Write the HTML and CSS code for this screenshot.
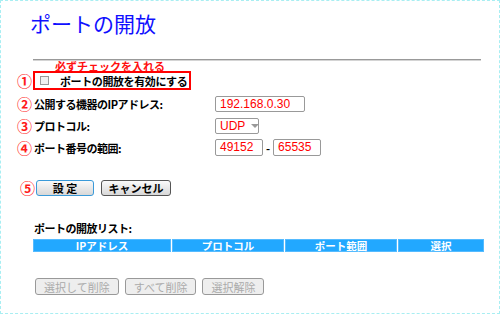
FILE: index.html
```html
<!DOCTYPE html>
<html lang="ja">
<head>
    <meta charset="UTF-8">
    <title>ポートの開放</title>
    <link rel="stylesheet" href="styles.css">
</head>
<body>
    <div class="page">
        <h1 class="title">ポートの開放</h1>
        <div class="rule"></div>

        <p class="note">必ずチェックを入れる</p>

        <div class="form">
            <span class="num">①</span>
            <label class="enable-box">
                <span class="checkbox"></span>
                ポートの開放を有効にする
            </label>

            <span class="num">②</span>
            <span class="label">公開する機器のIPアドレス:</span>
            <span class="field field-ip">192.168.0.30</span>

            <span class="num">③</span>
            <span class="label">プロトコル:</span>
            <span class="field field-select">UDP <span class="arrow"></span></span>

            <span class="num">④</span>
            <span class="label">ポート番号の範囲:</span>
            <span class="range">
                <span class="field field-port">49152</span>
                <span class="dash">-</span>
                <span class="field field-port">65535</span>
            </span>
        </div>

        <div class="actions">
            <span class="num">⑤</span>
            <button class="btn btn-focus">設 定</button>
            <button class="btn btn-cancel">キャンセル</button>
        </div>

        <p class="list-title">ポートの開放リスト:</p>
        <div class="list-head">
            <span>IPアドレス</span>
            <span>プロトコル</span>
            <span>ポート範囲</span>
            <span>選択</span>
        </div>

        <div class="list-actions">
            <button class="btn btn-off" disabled>選択して削除</button>
            <button class="btn btn-off" disabled>すべて削除</button>
            <button class="btn btn-off" disabled>選択解除</button>
        </div>
    </div>
</body>
</html>
```

FILE: styles.css
```css
/* Page reset */
html, body {
    margin: 0;
    padding: 0;
    background-color: #ffffff;
    font-family: "Noto Sans CJK JP", "Liberation Sans", sans-serif;
    color: #000000;
}

.page {
    width: 500px;
    height: 314px;
    box-sizing: border-box;
    border: 1px dashed #a8eef2;
    padding: 8px 18px 0 16px;
}

/* Heading */
.title {
    margin: 0 0 0 13px;
    font-size: 21px;
    line-height: 28px;
    font-weight: normal;
    color: #1010ff;
}

.rule {
    margin: 22px 0 0 16px;
    width: 448px;
    height: 1px;
    background-color: #999999;
    border-bottom: 1px solid #d4d4d4;
}

.note {
    margin: 0 0 0 38px;
    font-size: 11px;
    line-height: 10px;
    font-weight: bold;
    color: #ff1010;
}

/* Form rows */
.form {
    display: grid;
    grid-template-columns: 17px 181px auto;
    grid-template-rows: 19px 17px 17px 17px;
    row-gap: 5px;
    align-items: center;
    margin-top: 0;
}

.num {
    color: #ff1a1a;
    font-size: 15px;
    line-height: 16px;
    font-weight: bold;
}

.enable-box {
    grid-column: 2 / 4;
    justify-self: start;
    display: flex;
    align-items: center;
    gap: 11px;
    box-sizing: border-box;
    height: 19px;
    width: 158px;
    margin-left: -1px;
    padding: 0 0 0 5px;
    border: 2px solid #ff0000;
    font-size: 11px;
    font-weight: bold;
    letter-spacing: -0.4px;
}

.checkbox {
    width: 7px;
    height: 7px;
    border: 1px solid #999999;
    background: #f0f0f0;
}

.label {
    font-size: 11px;
    font-weight: bold;
    letter-spacing: -0.5px;
}

.field {
    box-sizing: border-box;
    height: 16px;
    border: 1px solid #999999;
    border-radius: 2px;
    padding: 0 4px;
    font-family: "Liberation Sans", Arial, sans-serif;
    font-size: 12px;
    line-height: 14px;
    color: #ff0000;
}

.field-ip {
    width: 90px;
}

.field-select {
    width: 44px;
    display: flex;
    align-items: center;
    gap: 6px;
}

.arrow {
    width: 0;
    height: 0;
    border-left: 4px solid transparent;
    border-right: 4px solid transparent;
    border-top: 4px solid #999999;
}

.range {
    display: flex;
    align-items: center;
    gap: 3px;
}

.field-port {
    width: 48px;
    height: 17px;
    line-height: 15px;
}

.dash {
    font-size: 11px;
    font-weight: bold;
}

/* Buttons */
.actions {
    display: flex;
    align-items: center;
    height: 16px;
    margin-top: 24px;
    margin-left: 3px;
}

.actions .num {
    width: 16px;
}

.btn {
    box-sizing: border-box;
    height: 16px;
    padding: 0;
    margin-right: 7px;
    border: 1px solid #555555;
    border-radius: 3px;
    background: linear-gradient(#fafafa, #d8d8d8);
    font-family: "Noto Sans CJK JP", sans-serif;
    font-size: 11px;
    font-weight: bold;
    line-height: 14px;
    color: #000000;
}

.btn-focus {
    width: 58px;
    border-color: #3a9ad9;
}

.btn-cancel {
    width: 70px;
}

.btn-off {
    height: 17px;
    padding: 0 8px;
    border-color: #999999;
    background: #eeeeee;
    color: #aaaaaa;
    font-weight: normal;
    margin-right: 6px;
}

/* List */
.list-title {
    margin: 26px 0 0 17px;
    font-size: 11px;
    line-height: 12px;
    font-weight: bold;
    letter-spacing: -0.5px;
}

.list-head {
    display: grid;
    grid-template-columns: 138px 112px 112px 86px;
    gap: 1px;
    margin: 5px 0 0 16px;
    width: 450px;
}

.list-head span {
    background-color: #22a8ff;
    border: 1px solid #55bbff;
    height: 11px;
    color: #ffffff;
    font-size: 10.5px;
    line-height: 11px;
    font-weight: bold;
    text-align: center;
}

.list-actions {
    display: flex;
    margin: 26px 0 0 18px;
}
```
